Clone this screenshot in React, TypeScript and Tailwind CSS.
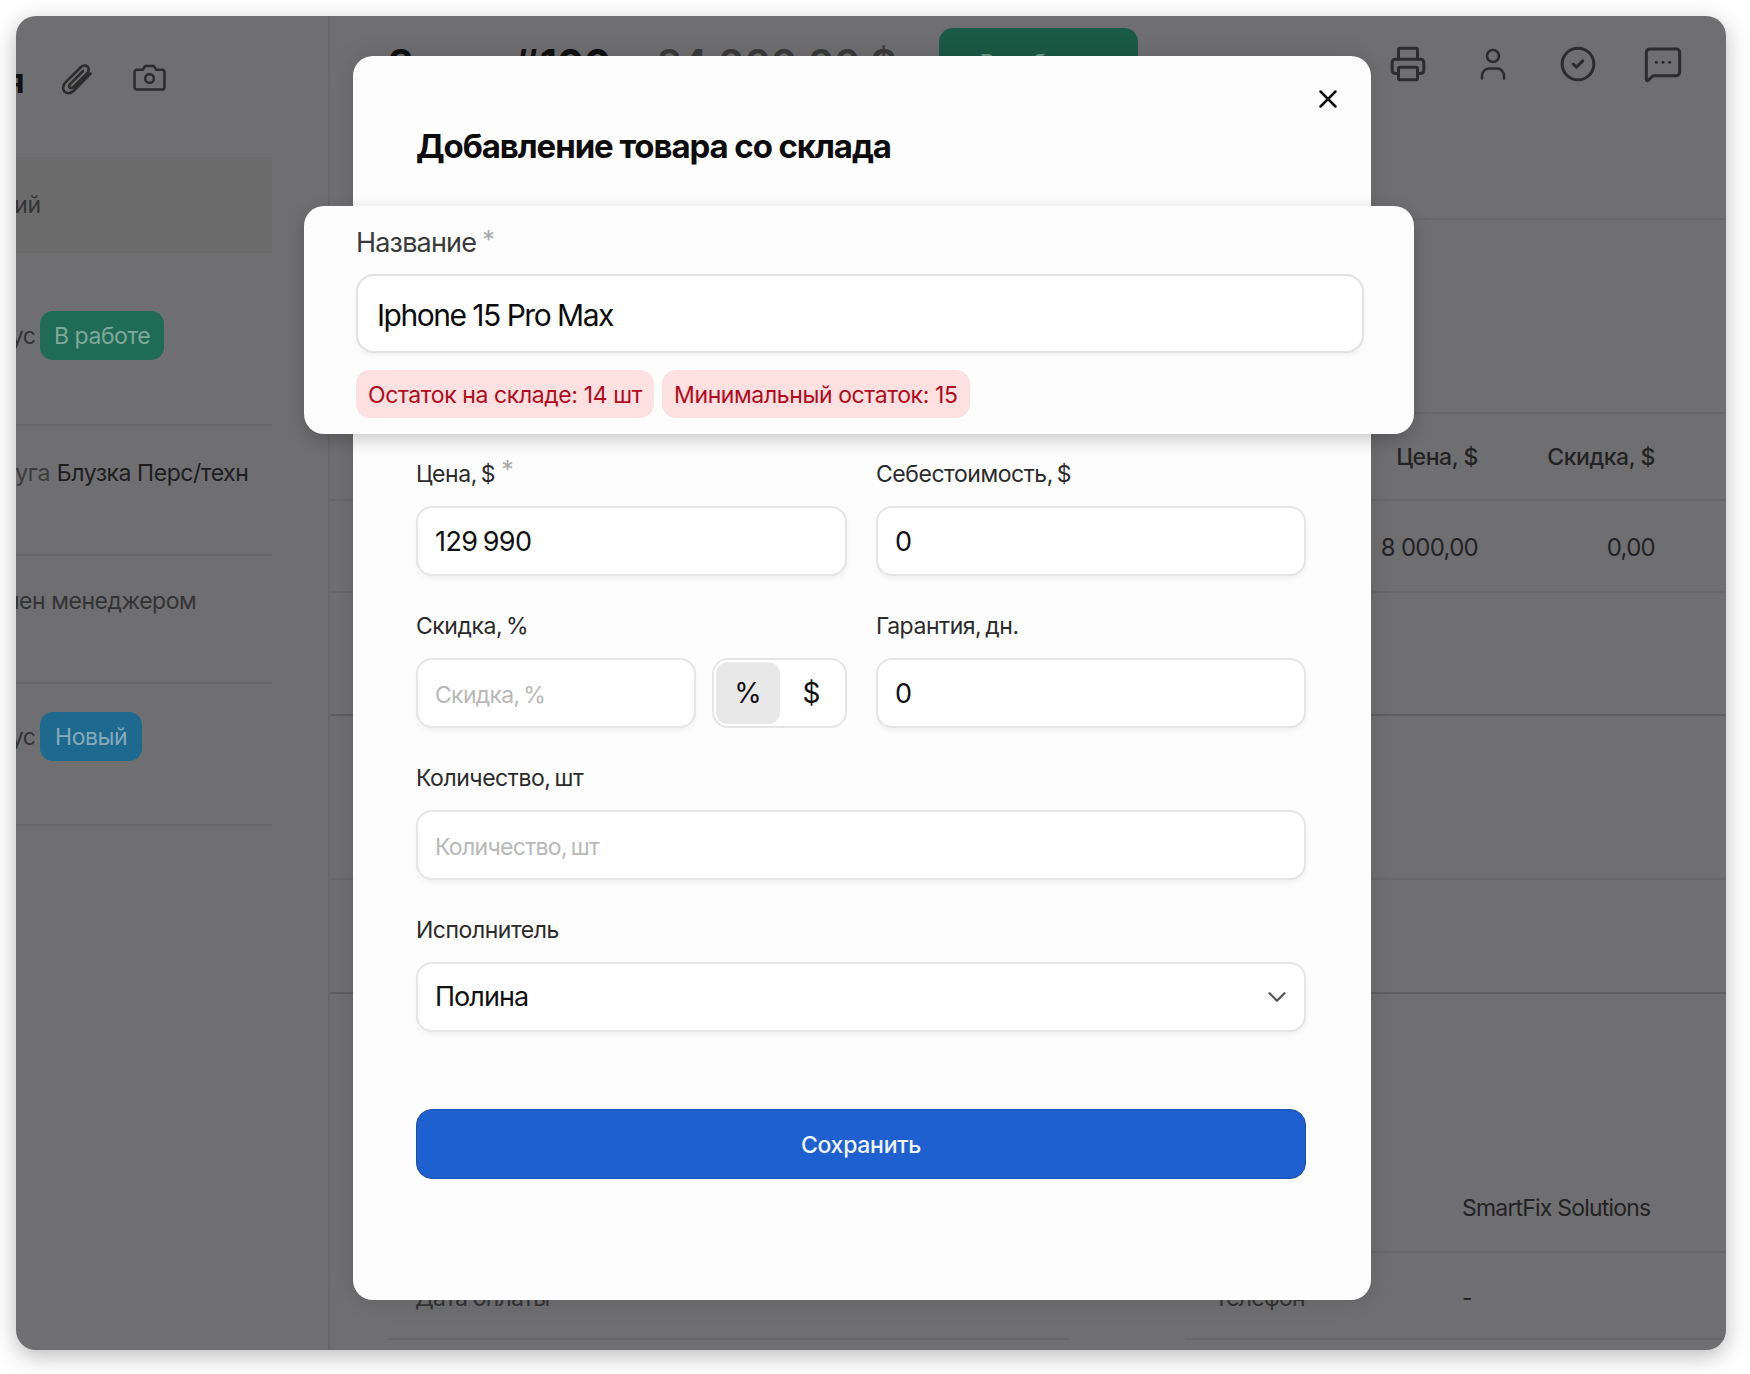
import React from 'react';
import { ChevronDown, CircleCheck, MessageSquareMore, Printer, X } from 'lucide-react';

const labelClass = 'h-[28px] text-[23px] leading-[28px] tracking-[-0.02em] [word-spacing:-2px] text-[#2b2b2b] whitespace-nowrap';
const inputClass =
  'w-full h-[70px] rounded-[16px] border-2 border-[#e5e5e5] bg-white px-[17px] text-[27px] tracking-[-0.02em] [word-spacing:-2px] text-[#111] shadow-[0_3px_5px_rgba(0,0,0,0.05)] outline-none placeholder:text-[#b8b8b8] placeholder:text-[23px] placeholder:tracking-[-0.03em]';

const Required = () => <span className="ml-[6px] align-[3px] text-[25px] leading-[0] text-[#a9a9a9]">*</span>;

const Field = ({ label, required, value, placeholder }: { label: string; required?: boolean; value?: string; placeholder?: string }) => (
  <div className="flex flex-col gap-[18px]">
    <div className={labelClass}>
      {label}
      {required && <Required />}
    </div>
    <input readOnly className={inputClass} value={value} placeholder={placeholder} />
  </div>
);

const Paperclip = () => (
  <svg width="32" height="33" viewBox="0 0 32 33" fill="none" stroke="#2c2c2d" strokeWidth="2.6" strokeLinecap="round" strokeLinejoin="round">
    <path d="M29.5 9.5 13 26.5c-3 3-7.200 3.500-9.500 1.200-2.300-2.400-1.800-6.500 1.200-9.500L19.500 3.500c2.200-2.200 5.300-2.500 7-.8 1.800 1.800 1.400 4.900-.8 7L12.500 23c-1.200 1.200-2.800 1.400-3.700.5-.9-.9-.7-2.500.5-3.700L22 7" />
  </svg>
);

const Camera = () => (
  <svg width="33" height="27" viewBox="0 0 34 28" fill="none" stroke="#2c2c2d" strokeWidth="2.6" strokeLinejoin="round">
    <path d="M4 6h6l2.500-4h9L24 6h6a2.500 2.500 0 0 1 2.500 2.500V24a2.500 2.500 0 0 1-2.500 2.500H4A2.500 2.500 0 0 1 1.500 24V8.500A2.500 2.500 0 0 1 4 6Z" />
    <circle cx="17" cy="15" r="4.500" />
  </svg>
);

const Person = () => (
  <svg width="26" height="32" viewBox="0 0 26 32" fill="none" stroke="#2c2c2d" strokeWidth="2.600" strokeLinecap="round">
    <circle cx="13" cy="8" r="6" />
    <path d="M2 30.500v-2.500c0-4.500 3.500-7.500 7-7.500h8c3.500 0 7 3 7 7.500v2.500" />
  </svg>
);

const App = () => {
  return (
    <div className="h-[1374px] w-[1750px] bg-white p-4 font-['Inter','Noto_Sans',sans-serif]">
      <div className="relative flex h-[1334px] w-[1710px] overflow-hidden rounded-[20px] bg-[#6f6f71] shadow-[0_6px_22px_rgba(0,0,0,0.28)]">
        {/* sidebar */}
        <aside className="flex w-[314px] shrink-0 flex-col overflow-hidden border-r-2 border-[#676768]">
          <div className="flex h-[141px] items-start pt-[48px]">
            <span className="ml-[-11px] w-[56px] text-[34px] leading-[34px] font-bold text-[#111]">я</span>
            <Paperclip />
            <span className="ml-[40px]"><Camera /></span>
          </div>
          <div className="flex h-[96px] w-[256px] items-center bg-[#6b6b6c]">
            <span className="ml-[-126px] text-[23px] tracking-[-0.02em] whitespace-nowrap text-[#333334]">Комментарий</span>
          </div>
          <div className="flex h-[173px] w-[256px] items-start border-b-2 border-[#676768] pt-[58px]">
            <span className="ml-[-55px] w-[79px] pt-[8px] text-[23px] tracking-[-0.02em] text-[#333334]">Статус</span>
            <span className="rounded-[13px] bg-[#1f6b55] px-[14px] pt-[8px] pb-[6px] text-[23px] tracking-[-0.02em] text-[#7fa99a]">В работе</span>
          </div>
          <div className="flex h-[130px] w-[256px] items-start gap-[7px] border-b-2 border-[#676768] pt-[30px] text-[23px] tracking-[-0.02em]">
            <span className="ml-[-38px] text-[#3c3c3d]">Услуга</span>
            <span className="whitespace-nowrap text-[#1d1d1e]">Блузка Перс/техн</span>
          </div>
          <div className="h-[128px] w-[256px] border-b-2 border-[#676768] pt-[28px]">
            <span className="ml-[-68px] block text-[23px] tracking-[-0.02em] whitespace-nowrap text-[#333334]">Изменен менеджером</span>
          </div>
          <div className="flex h-[142px] w-[256px] items-start border-b-2 border-[#676768] pt-[28px]">
            <span className="ml-[-55px] w-[79px] pt-[8px] text-[23px] tracking-[-0.02em] text-[#333334]">Статус</span>
            <span className="rounded-[13px] bg-[#1d6a8e] px-[15px] pt-[8px] pb-[6px] text-[23px] tracking-[-0.02em] text-[#86a9bc]">Новый</span>
          </div>
        </aside>

        {/* main */}
        <main className="flex min-w-0 flex-1 flex-col">
          <div className="flex h-[204px] shrink-0 items-start justify-between border-b-2 border-[#686869] pr-[21px] pl-[58px]">
            <div className="flex items-start pt-[12px]">
              <span className="mt-[14px] w-[269px] text-[40px] leading-[44px] font-bold whitespace-nowrap text-[#111]">Заказ #100</span>
              <span className="mt-[14px] w-[282px] text-[40px] leading-[44px] font-semibold whitespace-nowrap text-[#3a3a3b]">24 000,00 $</span>
              <span className="flex h-[70px] w-[199px] items-center justify-center rounded-[14px] bg-[#1b5a44] text-[23px] text-[#6f9a8a]">Разобрать</span>
            </div>
            <div className="flex items-center pt-[28px] text-[#2c2c2d]">
              <span className="flex w-[85px] justify-center"><Printer size={38} strokeWidth={1.9} /></span>
              <span className="flex w-[85px] justify-center"><Person /></span>
              <span className="flex w-[85px] justify-center"><CircleCheck size={38} strokeWidth={1.9} /></span>
              <span className="flex w-[85px] justify-center"><MessageSquareMore size={40} strokeWidth={1.8} /></span>
            </div>
          </div>
          <div className="h-[194px] shrink-0 border-b-2 border-[#676768]" />
          <div className="flex h-[87px] shrink-0 items-center justify-end border-b-2 border-[#676768] pt-[1px] pr-[71px] text-[23px] font-medium tracking-[-0.02em] text-[#232324]">
            <span className="w-[177px] text-right">Цена, $</span>
            <span className="w-[177px] text-right">Скидка, $</span>
          </div>
          <div className="flex h-[92px] shrink-0 items-center justify-end border-b-2 border-[#676768] pt-[3px] pr-[71px] text-[24px] tracking-[-0.03em] text-[#232324]">
            <span className="w-[177px] text-right">8 000,00</span>
            <span className="w-[177px] text-right">0,00</span>
          </div>
          <div className="h-[123px] shrink-0 border-b-2 border-[#5f5f60]" />
          <div className="h-[164px] shrink-0 border-b-2 border-[#676768]" />
          <div className="h-[114px] shrink-0 border-b-2 border-[#5f5f60]" />
          <div className="grid flex-1 grid-cols-[682px_541px] justify-between pl-[58px] text-[23px] tracking-[-0.035em] text-[#232324]">
            <div className="flex flex-col">
              <div className="h-[259px] border-b-2 border-[#676768]" />
              <div className="flex h-[87px] items-center border-b-2 border-[#676768] pt-[6px] pl-[27px] text-[#333334]">Дата оплаты</div>
            </div>
            <div className="flex flex-col">
              <div className="flex h-[259px] items-end border-b-2 border-[#676768] pb-[26px] pl-[277px] whitespace-nowrap">SmartFix Solutions</div>
              <div className="flex h-[87px] items-center border-b-2 border-[#676768] pt-[6px] pl-[29px]">
                <span className="w-[248px] text-[#333334]">Телефон</span>
                <span>-</span>
              </div>
            </div>
          </div>
        </main>

        {/* modal */}
        <div className="absolute top-[40px] left-[337px] flex h-[1244px] w-[1018px] flex-col rounded-[20px] bg-[#fdfdfd] pr-[65px] pl-[63px] shadow-[0_0_24px_rgba(0,0,0,0.12)]">
          <button className="absolute top-[28px] right-[28px] text-[#111]">
            <X size={30} strokeWidth={2} />
          </button>
          <h2 className="mt-[70px] h-[40px] text-[33px] leading-[40px] font-bold tracking-[-0.033em] whitespace-nowrap text-[#0c0c0c]">Добавление товара со склада</h2>

          <div className="mt-[40px] mr-[-108px] ml-[-112px] rounded-[20px] bg-[#fdfdfd] pt-[23px] pr-[50px] pb-[16px] pl-[52px] shadow-[0_6px_18px_rgba(0,0,0,0.2)]">
            <div className="h-[28px] text-[27px] leading-[28px] tracking-[-0.03em] text-[#3a3a3a]">
              Название
              <Required />
            </div>
            <input
              readOnly
              value="Iphone 15 Pro Max"
              className="mt-[17px] h-[79px] w-full rounded-[18px] border-2 border-[#e2e2e2] bg-white px-[19px] pt-[2px] text-[30px] tracking-[-0.05em] text-[#0c0c0c] shadow-[0_3px_5px_rgba(0,0,0,0.05)] outline-none"
            />
            <div className="mt-[17px] flex gap-[8px] text-[23px] tracking-[-0.017em] text-[#b20a1c]">
              <span className="flex h-[48px] items-center rounded-[14px] bg-[#fde0e0] px-[12px] pt-[2px]">Остаток на складе: 14 шт</span>
              <span className="flex h-[48px] items-center rounded-[14px] bg-[#fde0e0] px-[12px] pt-[2px]">Минимальный остаток: 15</span>
            </div>
          </div>

          <div className="mt-[26px] flex flex-col gap-[36px]">
            <div className="grid grid-cols-[431px_430px] gap-x-[29px]">
              <Field label="Цена, $" required value="129 990" />
              <Field label="Себестоимость, $" value="0" />
            </div>
            <div className="grid grid-cols-[431px_430px] gap-x-[29px]">
              <div className="flex flex-col gap-[18px]">
                <div className={labelClass}>Скидка, %</div>
                <div className="flex gap-[16px]">
                  <input readOnly placeholder="Скидка, %" className={`${inputClass} flex-1`} />
                  <div className="flex h-[70px] w-[135px] shrink-0 items-center rounded-[16px] border-2 border-[#e5e5e5] bg-white p-[2px] text-[28px] text-[#111]">
                    <span className="flex h-full w-[64px] items-center justify-center rounded-[12px] bg-[#e8e8e8]">%</span>
                    <span className="flex h-full flex-1 items-center justify-center">$</span>
                  </div>
                </div>
              </div>
              <Field label="Гарантия, дн." value="0" />
            </div>
            <Field label="Количество, шт" placeholder="Количество, шт" />
            <div className="flex flex-col gap-[18px]">
              <div className={labelClass}>Исполнитель</div>
              <div className="flex h-[70px] items-center justify-between rounded-[16px] border-2 border-[#e5e5e5] bg-white pr-[12px] pl-[17px] text-[27px] tracking-[-0.035em] text-[#111] shadow-[0_3px_5px_rgba(0,0,0,0.05)]">
                Полина
                <ChevronDown size={30} strokeWidth={1.8} className="text-[#555]" />
              </div>
            </div>
          </div>

          <button className="mt-[77px] h-[70px] w-full shrink-0 rounded-[16px] border border-[#1a50ad] bg-[#1f60d0] pt-[2px] text-[23px] font-medium tracking-[-0.012em] text-[#f0f4ff]">
            Сохранить
          </button>
        </div>
      </div>
    </div>
  );
};

export default App;
